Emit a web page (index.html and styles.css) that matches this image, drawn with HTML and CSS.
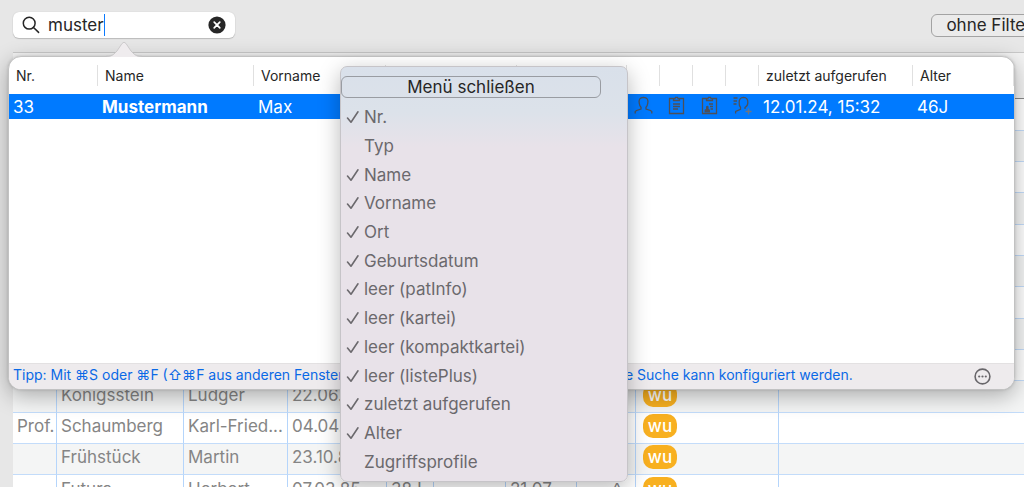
FILE: index.html
```
<!DOCTYPE html>
<html lang="de">
<head>
<meta charset="utf-8">
<title>Patientensuche</title>
<link rel="stylesheet" href="styles.css">
</head>
<body>
<header class="toolbar">
  <div class="search">
    <label class="search-label" for="q" aria-label="Suche">
      <svg width="18" height="18" viewBox="0 0 18 18" fill="none" stroke="#262626" stroke-width="1.5" stroke-linecap="round"><circle cx="7.2" cy="7.2" r="5.9"/><path d="M11.5 11.5 16.6 16.4"/></svg>
    </label>
    <input id="q" class="search-input" type="text" value="muster">
    <span class="caret"></span>
    <button class="clear" type="button" aria-label="Löschen">
      <svg width="18" height="18" viewBox="0 0 18 18"><circle cx="9" cy="9" r="8.6" fill="#262626"/><path d="M6.2 6.2l5.6 5.6M11.8 6.2l-5.6 5.6" stroke="#fff" stroke-width="1.7" stroke-linecap="round"/></svg>
    </button>
  </div>
  <button class="filter" type="button">ohne Filter</button>
</header>

<main class="content">
  <table class="patients">
    <colgroup><col class="p-title"><col class="p-name"><col class="p-first"><col class="p-birth"><col class="p-age"><col class="p-gap"><col class="p-date"><col class="p-mark"><col class="p-tag"><col></colgroup>
    <thead><tr><th></th><th></th><th></th><th></th><th></th><th></th><th></th><th></th><th></th><th></th></tr></thead>
    <tbody>
      <tr><td></td><td></td><td></td><td></td><td></td><td></td><td></td><td></td><td></td><td></td></tr>
      <tr><td></td><td></td><td></td><td></td><td></td><td></td><td></td><td></td><td></td><td></td></tr>
      <tr><td></td><td></td><td></td><td></td><td></td><td></td><td></td><td></td><td></td><td></td></tr>
      <tr><td></td><td></td><td></td><td></td><td></td><td></td><td></td><td></td><td></td><td></td></tr>
      <tr><td></td><td></td><td></td><td></td><td></td><td></td><td></td><td></td><td></td><td></td></tr>
      <tr><td></td><td></td><td></td><td></td><td></td><td></td><td></td><td></td><td></td><td></td></tr>
      <tr><td></td><td></td><td></td><td></td><td></td><td></td><td></td><td></td><td></td><td></td></tr>
      <tr><td></td><td></td><td></td><td></td><td></td><td></td><td></td><td></td><td></td><td></td></tr>
      <tr><td></td><td></td><td></td><td></td><td></td><td></td><td></td><td></td><td></td><td></td></tr>
      <tr><td></td><td>Königsstein</td><td>Ludger</td><td>22.06.</td><td></td><td></td><td></td><td></td><td><span class="tag">wu</span></td><td></td></tr>
      <tr><td>Prof.</td><td>Schaumberg</td><td>Karl-Fried...</td><td>04.04.</td><td></td><td></td><td></td><td></td><td><span class="tag">wu</span></td><td></td></tr>
      <tr><td></td><td>Frühstück</td><td>Martin</td><td>23.10.8</td><td></td><td></td><td></td><td></td><td><span class="tag">wu</span></td><td></td></tr>
      <tr><td></td><td>Futura</td><td>Herbert</td><td>07.03.85</td><td>38J</td><td></td><td>21.07.</td><td class="mark">^</td><td><span class="tag">wu</span></td><td></td></tr>
    </tbody>
  </table>
</main>

<section class="popover">
  <svg class="arrow" width="36" height="17" viewBox="0 0 36 17"><path d="M0 17C7 17 8 14 11 11L16 3.5Q18 .8 20 3.5L25 11C28 14 29 17 36 17Z" fill="#efecee"/><path d="M0 16.2C7 16 8 14 11 11L16 3.5Q18 .8 20 3.5L25 11C28 14 29 16 36 16.2" fill="none" stroke="#c4c3c4" stroke-width=".8"/></svg>
  <div class="popover-body">
    <table class="results">
      <colgroup><col class="r-nr"><col class="r-name"><col class="r-first"><col class="r-city"><col class="r-birth"><col class="r-icon"><col class="r-icon"><col class="r-icon"><col class="r-icon"><col class="r-last"><col></colgroup>
      <thead><tr><th>Nr.</th><th>Name</th><th>Vorname</th><th></th><th></th><th></th><th></th><th></th><th></th><th>zuletzt aufgerufen</th><th>Alter</th></tr></thead>
      <tbody><tr>
        <td>33</td><td><b>Mustermann</b></td><td>Max</td><td></td><td></td>
        <td class="icon"><svg width="19" height="20" viewBox="0 0 19 20"><path d="M1.2 17.5V15.5L2.5 14.5 7 13V11.3Q5.6 10 5.3 7.5Q4 1.6 9.5 1.3Q15 1.6 13.7 7.5Q13.4 10 12 11.3V13L16.5 14.5 17.8 15.5V17.5"/></svg></td>
        <td class="icon"><svg width="19" height="20" viewBox="0 0 19 20"><path d="M6 2.5H2.5V17.5H16.5V2.5H13M6.5 4.5V2.5H8L8.5 1.3H10.5L11 2.5H12.5V4.5ZM6 8H13M6 10.5H13M6 13H11"/></svg></td>
        <td class="icon"><svg width="19" height="20" viewBox="0 0 19 20"><path d="M6 2.5H2.5V17.5H16.5V2.5H13M6.5 4.5V2.5H8L8.5 1.3H10.5L11 2.5H12.5V4.5ZM9 8H13M10 10.5H13M10.5 13H13"/><path class="solid" d="M4.5 16.5V13.8L6 13V10.5Q7.3 9 8.6 10.5V13L10 13.8V16.5Z"/></svg></td>
        <td class="icon"><svg width="19" height="20" viewBox="0 0 19 20"><path d="M.5 2H4.5M.5 5H4M.5 8H3.5M2.6 17.5V15.5L7.5 13.3V11.3Q6 10 6.2 7Q5.8 1.4 10.5 1.3Q15.2 1.4 14.8 7Q14.7 10 12 11.5V13"/><path class="plus" d="M12.5 15.5H18.5M15.5 12.5V18.5"/></svg></td>
        <td>12.01.24, 15:32</td><td>46J</td>
      </tr></tbody>
    </table>
    <footer class="tip">
      <span>Tipp: Mit ⌘S oder ⌘F (⇧⌘F aus anderen Fenster</span>
      <span>e Suche kann konfiguriert werden.</span>
      <button class="more" type="button" aria-label="Mehr"><svg width="17" height="17" viewBox="0 0 17 17"><circle cx="8.5" cy="8.5" r="7.4" fill="none" stroke="#68666a" stroke-width="1.6"/><g fill="#68666a"><circle cx="5.2" cy="8.5" r="1.1"/><circle cx="8.5" cy="8.5" r="1.1"/><circle cx="11.8" cy="8.5" r="1.1"/></g></svg></button>
    </footer>
  </div>
</section>

<div class="menu">
  <button class="close" type="button">Menü schließen</button>
  <div class="options">
    <label><input type="checkbox" checked>Nr.</label>
    <label><input type="checkbox">Typ</label>
    <label><input type="checkbox" checked>Name</label>
    <label><input type="checkbox" checked>Vorname</label>
    <label><input type="checkbox" checked>Ort</label>
    <label><input type="checkbox" checked>Geburtsdatum</label>
    <label><input type="checkbox" checked>leer (patInfo)</label>
    <label><input type="checkbox" checked>leer (kartei)</label>
    <label><input type="checkbox" checked>leer (kompaktkartei)</label>
    <label><input type="checkbox" checked>leer (listePlus)</label>
    <label><input type="checkbox" checked>zuletzt aufgerufen</label>
    <label><input type="checkbox" checked>Alter</label>
    <label><input type="checkbox">Zugriffsprofile</label>
  </div>
</div>
</body>
</html>
```
FILE: styles.css
```
* { box-sizing: border-box; }

body {
  margin: 0;
  height: 100vh;
  overflow: hidden;
  position: relative;
  background: #e7e7e7;
  color: #262626;
  font: 17px/20px Inter, "Noto Sans", sans-serif;
}

button, input { font: inherit; color: inherit; margin: 0; }
button { border: 0; padding: 0; background: none; }
svg { display: block; }
table { border-collapse: separate; border-spacing: 0; table-layout: fixed; width: 100%; }
th, td { padding: 0; text-align: left; font-weight: 400; white-space: nowrap; overflow: hidden; }

/* Toolbar */
.toolbar {
  display: flex;
  justify-content: space-between;
  align-items: center;
  height: 52px;
  padding: 0 0 2px 13px;
}
.search {
  display: flex;
  align-items: center;
  width: 222px;
  height: 26px;
  padding: 0 9px;
  border-radius: 6px;
  background: #fff;
  box-shadow: 0 0 1px #bbb, 0 1px 1px #bbb;
}
.search-label { margin-right: 8px; }
.search-input {
  field-sizing: content;
  border: 0;
  padding: 0;
  background: none;
  outline: 0;
}
.caret { width: 1px; height: 22px; background: #0a7aff; }
.clear { margin-left: auto; }
.filter {
  width: 120px;
  height: 23px;
  margin-right: -27px;
  padding-right: 4px;
  border: 1px solid #a3a3a3;
  border-radius: 6px;
  background: #ebebeb;
}

/* Patient list */
.content { padding-left: 13px; }
.patients { color: #858585; background: #fff; border-top: 1px solid #c9c9c9; }
.patients th { height: 46px; background: #f3f3f3; border-bottom: 1px solid #8a8a8a; }
.patients td {
  height: 31px;
  padding: 0 0 4px 4px;
  border-right: 1px solid #b5d5fb;
  border-bottom: 1px solid #c3dcfa;
}
.patients td:last-child { border-right: 0; }
.patients tr:nth-child(3n + 1) td { height: 32px; }
.patients tr:nth-child(even) td { background: #f4f5f5; }
.patients .mark { text-align: center; padding-left: 22px; }
.p-title { width: 44px; }
.p-name { width: 127px; }
.p-first { width: 104px; }
.p-birth { width: 99px; }
.p-age { width: 47px; }
.p-gap { width: 72px; }
.p-date { width: 71px; }
.p-mark { width: 59px; }
.p-tag { width: 143px; }
.tag {
  display: block;
  width: 34px;
  height: 24px;
  margin-left: 3px;
  border-radius: 10px;
  background: #f8b020;
  color: #fff;
  font-weight: 500;
  line-height: 24px;
  text-align: center;
}

/* Search results popover */
.popover {
  position: absolute;
  top: 56px;
  left: 8px;
  right: 9px;
}
.arrow { position: absolute; top: -16px; left: 98px; z-index: 1; }
.popover-body {
  display: flex;
  flex-direction: column;
  height: 334px;
  border: 1px solid #c2c2c2;
  border-radius: 13px;
  background: #fff;
  box-shadow: 0 6px 22px rgba(0, 0, 0, .3), 0 0 3px rgba(0, 0, 0, .15);
  overflow: hidden;
}
.results th {
  height: 37px;
  padding: 0 0 0 7px;
  font-size: 14px;
  background: linear-gradient(#e0e0e0, #e0e0e0) right 8px / 1px 21px no-repeat;
}
.results td { height: 25px; padding-left: 4px; padding-top: 1px; background: #007aff; color: #fff; }
.results b { font-weight: 700; }
.results .icon { padding: 0 0 2px 7px; }
.icon svg { fill: none; stroke: #4d5058; stroke-width: 1.3; }
.icon .solid { fill: #4d5058; stroke: none; }
.icon .plus { stroke: #6e7680; }
.r-nr { width: 89px; }
.r-name { width: 156px; }
.r-first { width: 132px; }
.r-city { width: 131px; }
.r-birth { width: 110px; }
.r-icon { width: 33px; }
.r-last { width: 154px; }
.tip {
  display: grid;
  grid-template-columns: 612px 1fr auto;
  align-items: center;
  height: 26px;
  margin-top: auto;
  padding: 0 23px 3px 4px;
  border-top: 1px solid #e3e1e2;
  background: #eeebed;
  color: #0a69e6;
  font-size: 14px;
  white-space: nowrap;
}
.more { padding-top: 2px; }

/* Column menu */
.menu {
  position: absolute;
  top: 66px;
  left: 340px;
  width: 288px;
  height: 416px;
  display: flex;
  flex-direction: column;
  padding: 9px 0 5px;
  border: 1px solid #c6c4c8;
  border-radius: 7px;
  background: linear-gradient(#d9e0ea, #dce2ea 45px, #e8e2e9 80px, #e8e2e9);
  box-shadow: 0 6px 22px rgba(0, 0, 0, .28);
}
.close {
  width: 260px;
  height: 22px;
  border: 1px solid #999ca2;
  border-radius: 6px;
}
.options {
  flex: 1;
  display: grid;
  grid-auto-rows: 1fr;
  padding-top: 5px;
  color: #6b696d;
}
.options label { display: flex; align-items: center; gap: 4px; padding-left: 5px; }
.options input { appearance: none; width: 14px; height: 14px; }
.options input:checked {
  background: url("data:image/svg+xml,%3Csvg xmlns='http://www.w3.org/2000/svg' viewBox='0 0 14 14'%3E%3Cpath d='M1.5 8 5 12.2 12 1.8' fill='none' stroke='%236b696d' stroke-width='1.6' stroke-linecap='round' stroke-linejoin='round'/%3E%3C/svg%3E");
}
```
